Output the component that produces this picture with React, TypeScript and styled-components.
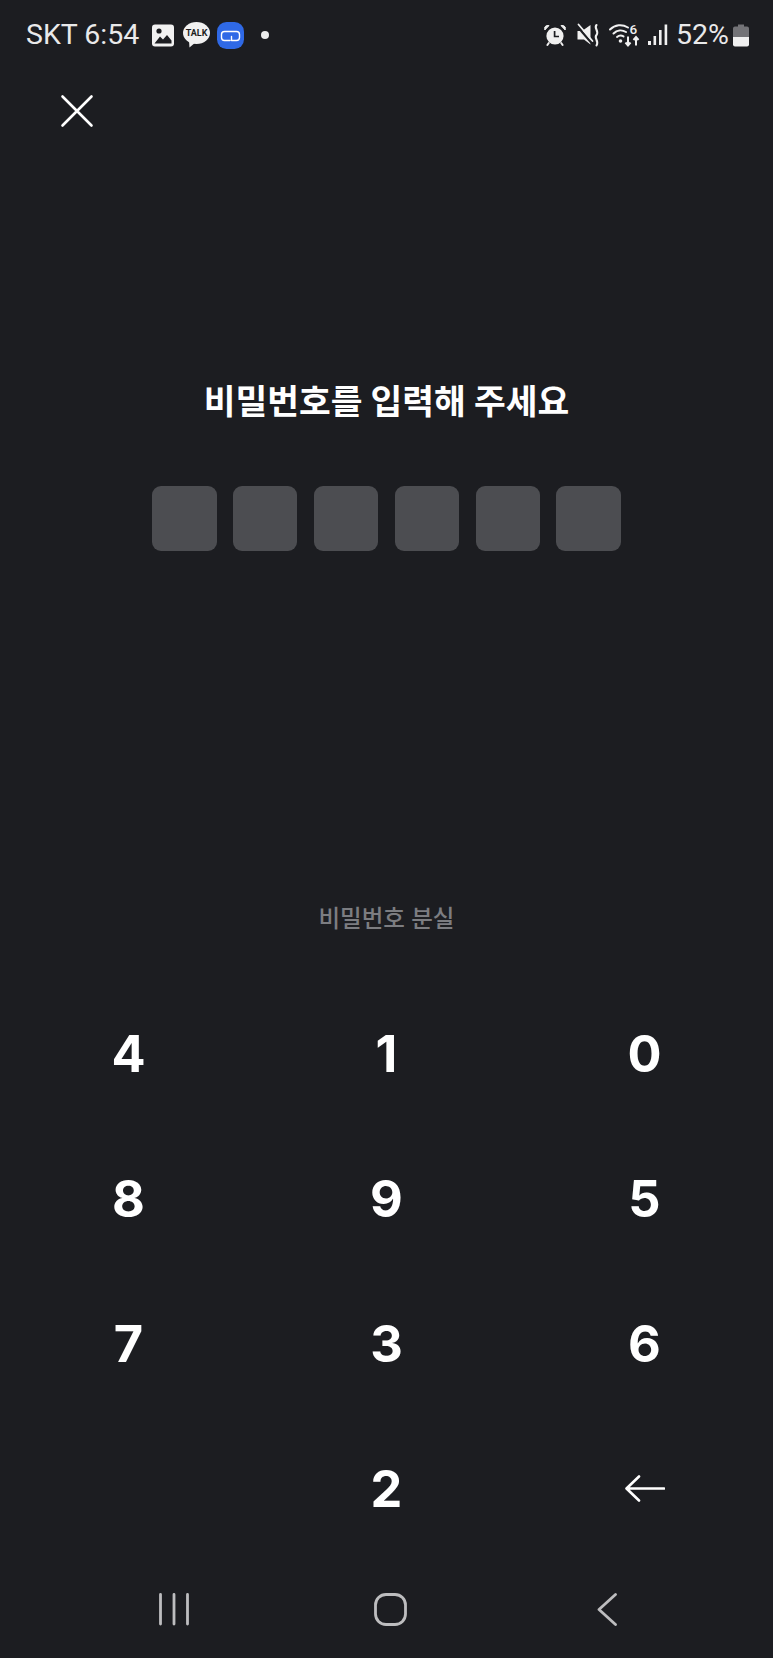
import React from "react";
import styled, { createGlobalStyle } from "styled-components";

const Global = createGlobalStyle`
  html, body { margin: 0; padding: 0; background: #1c1d21; }
  * { box-sizing: border-box; }
`;

const Page = styled.div`
  width: 773px;
  height: 1658px;
  background: #1c1d21;
  display: flex;
  flex-direction: column;
  overflow: hidden;
  font-family: Inter, "Noto Sans CJK KR", sans-serif;
`;

const StatusBar = styled.div`
  height: 70px;
  padding: 0 24px 0 26px;
  display: flex;
  align-items: center;
  justify-content: space-between;
  color: #e9e9ea;
  font-family: Roboto, sans-serif;
  font-size: 28.5px;
`;

const StatusGroup = styled.div`
  display: flex;
  align-items: center;
`;

const StatusText = styled.span<{ $left?: number }>`
  margin-left: ${(p) => p.$left ?? 0}px;
  line-height: 32px;
  white-space: nowrap;
`;

const StatusIcon = styled.svg<{ $left?: number }>`
  display: block;
  flex: none;
  overflow: visible;
  margin-left: ${(p) => p.$left ?? 0}px;
`;

const CloseRow = styled.div`
  margin-top: 24px;
  padding-left: 60px;
  height: 32px;
`;

const IconButton = styled.button`
  display: block;
  padding: 0;
  border: 0;
  background: none;
  line-height: 0;
`;

const Title = styled.h1`
  margin: 254px 0 0;
  height: 44px;
  text-align: center;
  font-size: 34.5px;
  line-height: 44px;
  font-weight: 700;
  color: #ffffff;
`;

const Boxes = styled.div`
  margin-top: 62px;
  display: flex;
  justify-content: center;
  gap: 16.4px;
`;

const Box = styled.div`
  width: 64.5px;
  height: 64.5px;
  border-radius: 9px;
  background: #4c4d51;
`;

const Forgot = styled.div`
  margin-top: 353px;
  height: 30px;
  text-align: center;
  font-size: 23.5px;
  line-height: 30px;
  font-weight: 500;
  color: #7c7d81;
`;

const Keypad = styled.div`
  margin-top: 47.5px;
  display: grid;
  grid-template-columns: repeat(3, 258px);
  grid-auto-rows: 145px;
  justify-content: center;
`;

const Key = styled.div`
  display: flex;
  align-items: center;
  justify-content: center;
  font-size: 50.5px;
  font-weight: 700;
  color: #ffffff;
`;

const NavBar = styled.div`
  height: 96px;
  display: flex;
  align-items: flex-start;
  padding: 31.5px 0 0 159px;
  gap: 185px;
`;

const NavBack = styled.svg`
  display: block;
  margin-left: 5px;
`;

const ImageIcon = () => (
  <StatusIcon $left={13} width="22" height="23" viewBox="0 0 22 23">
    <rect x="0" y="0.5" width="22" height="22" rx="3" fill="#f1f1f1" />
    <circle cx="7" cy="7" r="2.6" fill="#1c1d21" />
    <path d="M2.5 19.5 L8 12.5 L11 15.5 L15 11 L19.5 16.5 V19.5 Z" fill="#1c1d21" />
  </StatusIcon>
);

const TalkIcon = () => (
  <StatusIcon $left={9} width="27" height="26" viewBox="0 0 27 26">
    <ellipse cx="13.5" cy="11" rx="13.5" ry="11" fill="#f1f1f1" />
    <path d="M6 18 L6.5 25.5 L13 20 Z" fill="#f1f1f1" />
    <text x="13.5" y="14" textAnchor="middle" fontFamily="Roboto, sans-serif" fontWeight="700" fontSize="9" fill="#1c1d21">TALK</text>
  </StatusIcon>
);

const LinkIcon = () => (
  <StatusIcon $left={7} width="27" height="27" viewBox="0 0 27 27">
    <rect width="27" height="27" rx="9.5" fill="#2f69e6" />
    <path d="M13 18.5 H7.5 a3 3 0 0 1 -3 -3 v-3 a3 3 0 0 1 3 -3 H19.5 a3 3 0 0 1 3 3 v3 a3 3 0 0 1 -3 3 H14.5 V14.5" fill="none" stroke="#fff" strokeWidth="1.4" strokeLinecap="round" strokeLinejoin="round" />
  </StatusIcon>
);

const Dot = () => (
  <StatusIcon $left={17} width="8" height="8" viewBox="0 0 8 8">
    <circle cx="4" cy="4" r="4" fill="#ececec" />
  </StatusIcon>
);

const AlarmIcon = () => (
  <StatusIcon width="22" height="22" viewBox="0 0 22 22">
    <circle cx="11" cy="12" r="8.6" fill="#f0f0f0" />
    <path d="M0.8 6 L5 1.6 Q2 0.8 0.8 3 Z M21.2 6 L17 1.6 Q20 0.8 21.2 3 Z" fill="#f0f0f0" stroke="#f0f0f0" strokeWidth="1" />
    <path d="M4.8 19 L3.4 21 M17.2 19 L18.6 21" stroke="#f0f0f0" strokeWidth="2" strokeLinecap="round" />
    <path d="M10.6 7 V12.5 H15" fill="none" stroke="#1c1d21" strokeWidth="1.7" />
  </StatusIcon>
);

const MuteIcon = () => (
  <StatusIcon $left={11} width="23" height="23" viewBox="0 0 23 23">
    <path d="M0.5 7 H5 L13.5 1 V20.5 L7 15.5 H0.5 Z" fill="#f0f0f0" />
    <path d="M0 2 L15 19.5" stroke="#1c1d21" strokeWidth="2.2" />
    <path d="M1.5 0.5 L15.5 17" stroke="#f0f0f0" strokeWidth="1.8" strokeLinecap="round" />
    <path d="M19.5 1 C16.5 4 22.5 7 19.5 11 C16.5 14 22.5 17 19.5 21.5" fill="none" stroke="#f0f0f0" strokeWidth="2.1" strokeLinecap="round" />
  </StatusIcon>
);

const WifiIcon = () => (
  <StatusIcon $left={9} width="32" height="24" viewBox="0 0 32 24">
    <g fill="none" stroke="#f0f0f0" strokeWidth="2" strokeLinecap="round">
      <path d="M1 6.5 C6 1.6 13 1 19 4.5" />
      <path d="M4.5 10.5 C8 7 13 6.6 17 9" />
      <path d="M8 14 C10 12.4 12.5 12.3 14.5 13.4" />
    </g>
    <circle cx="11.5" cy="18" r="1.8" fill="#f0f0f0" />
    <text x="20.5" y="11" fontFamily="Roboto, sans-serif" fontSize="13.5" fontWeight="500" fill="#f0f0f0">6</text>
    <path d="M19 13.5 V22 M16.5 19.5 L19 22.5 L21.5 19.5 M27 22.5 V14 M24.5 17 L27 14 L29.5 17" fill="none" stroke="#f0f0f0" strokeWidth="2" />
  </StatusIcon>
);

const SignalIcon = () => (
  <StatusIcon $left={7} width="20" height="22" viewBox="0 0 20 22">
    <g fill="#f0f0f0">
      <rect x="0" y="17" width="3" height="4" />
      <rect x="5.5" y="12" width="2.6" height="9" />
      <rect x="11" y="6" width="2.6" height="15" />
      <rect x="16.6" y="0.5" width="2.6" height="20.5" />
    </g>
  </StatusIcon>
);

const BatteryIcon = () => (
  <StatusIcon $left={4} width="16" height="23" viewBox="0 0 16 23">
    <path d="M5 0.5 H11 V2.5 H14 a2 2 0 0 1 2 2 V13 H0 V4.5 a2 2 0 0 1 2 -2 H5 Z" fill="#737377" />
    <path d="M0 13 H16 V20.5 a2 2 0 0 1 -2 2 H2 a2 2 0 0 1 -2 -2 Z" fill="#f0f0f0" />
  </StatusIcon>
);

const keys = ["4", "1", "0", "8", "9", "5", "7", "3", "6", "", "2"];

export default function App() {
  return (
    <Page>
      <Global />
      <StatusBar>
        <StatusGroup>
          <StatusText>SKT 6:54</StatusText>
          <ImageIcon />
          <TalkIcon />
          <LinkIcon />
          <Dot />
        </StatusGroup>
        <StatusGroup>
          <AlarmIcon />
          <MuteIcon />
          <WifiIcon />
          <SignalIcon />
          <StatusText $left={8}>52%</StatusText>
          <BatteryIcon />
        </StatusGroup>
      </StatusBar>
      <CloseRow>
        <IconButton aria-label="닫기">
          <svg width="34" height="34" viewBox="0 0 34 34">
            <path d="M2.5 2.5 L31.5 31.5 M31.5 2.5 L2.5 31.5" stroke="#fff" strokeWidth="2.6" strokeLinecap="round" />
          </svg>
        </IconButton>
      </CloseRow>
      <Title>비밀번호를 입력해 주세요</Title>
      <Boxes>
        {Array.from({ length: 6 }, (_, i) => (
          <Box key={i} />
        ))}
      </Boxes>
      <Forgot>비밀번호 분실</Forgot>
      <Keypad>
        {keys.map((k, i) => (
          <Key key={i}>{k}</Key>
        ))}
        <Key>
          <svg width="40" height="27" viewBox="0 0 40 27">
            <path d="M39 13.5 H2 M14 1.5 L1.5 13.5 L14 25.5" fill="none" stroke="#fff" strokeWidth="2.6" strokeLinecap="round" strokeLinejoin="round" />
          </svg>
        </Key>
      </Keypad>
      <NavBar>
        <svg width="30" height="33" viewBox="0 0 30 33">
          <path d="M1.5 1.5 V31 M15 1.5 V31 M28.5 1.5 V31" stroke="#bdbdbf" strokeWidth="2.8" strokeLinecap="round" />
        </svg>
        <svg width="33" height="33" viewBox="0 0 33 33">
          <rect x="1.5" y="1.5" width="30" height="30" rx="10.5" fill="none" stroke="#bdbdbf" strokeWidth="2.8" />
        </svg>
        <NavBack width="20" height="33" viewBox="0 0 20 33">
          <path d="M18.5 1.5 L2 16.5 L18.5 31.5" fill="none" stroke="#bdbdbf" strokeWidth="2.8" strokeLinecap="round" strokeLinejoin="round" />
        </NavBack>
      </NavBar>
    </Page>
  );
}
